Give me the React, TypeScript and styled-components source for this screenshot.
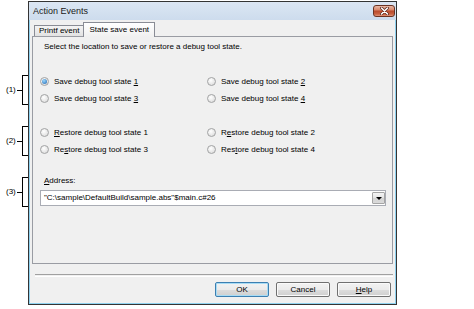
import React from "react";
import styled, { createGlobalStyle, css } from "styled-components";

const GlobalStyle = createGlobalStyle`
  html, body {
    margin: 0;
    padding: 0;
    background: #ffffff;
  }
  body {
    font-family: "Liberation Sans", Arial, sans-serif;
    font-size: 8px;
    color: #000;
  }
`;

const Stage = styled.div`
  position: relative;
  width: 474px;
  height: 309px;
  padding: 1px 0 0 28px;
  box-sizing: border-box;
`;

const Window = styled.div`
  width: 369px;
  height: 304px;
  box-sizing: border-box;
  border: 1px solid #343434;
  background: #8fd2ef;
  display: flex;
  flex-direction: column;
`;

const TitleBar = styled.div`
  height: 18px;
  flex-shrink: 0;
  display: flex;
  align-items: flex-start;
  padding-left: 4px;
  background: linear-gradient(to bottom, #dbe6f3, #cddced);
`;

const Title = styled.span`
  font-size: 9px;
  line-height: 18px;
  color: #1a1a1a;
`;

const CloseButton = styled.div`
  margin: 3px 1px 0 auto;
  width: 22px;
  height: 12px;
  box-sizing: border-box;
  border: 1px solid #6b3323;
  border-radius: 3px;
  background: linear-gradient(
    to bottom,
    #e9b8a6 0%,
    #d9876a 40%,
    #b94a2d 50%,
    #c9613f 80%,
    #e09378 100%
  );
  display: flex;
  align-items: center;
  justify-content: center;
`;

const Client = styled.div`
  flex: 1;
  margin: 0 1px 1px 1px;
  padding: 1px 2px 0 2px;
  background: #f0f0f0;
  display: flex;
  flex-direction: column;
`;

const TabStrip = styled.div`
  height: 15px;
  display: flex;
  align-items: flex-end;
  padding-left: 2px;
  position: relative;
  z-index: 1;
`;

const Tab = styled.div<{ $active?: boolean }>`
  box-sizing: border-box;
  border: 1px solid #898c95;
  border-bottom: none;
  white-space: nowrap;
  ${(p) =>
    p.$active
      ? css`
          height: 15px;
          margin-bottom: -1px;
          padding: 0 5px;
          line-height: 13px;
          background: linear-gradient(to bottom, #ffffff, #f0f0f0);
        `
      : css`
          height: 11px;
          padding: 0 4px;
          line-height: 10px;
          background: linear-gradient(to bottom, #f4f4f4, #e2e2e2);
          border-right: none;
        `}
`;

const Panel = styled.div`
  height: 228px;
  box-sizing: border-box;
  border: 1px solid #9a9ca3;
  padding: 5px 7px 0 7px;
  background: #f0f0f0;
  display: flex;
  flex-direction: column;
`;

const Description = styled.div`
  height: 10px;
  line-height: 10px;
  margin-left: 4px;
`;

const RadioGrid = styled.div<{ $gap: number }>`
  margin-top: ${(p) => p.$gap}px;
  display: grid;
  grid-template-columns: 167px 1fr;
  grid-auto-rows: 17px;
`;

const RadioItem = styled.label`
  display: flex;
  align-items: center;
  gap: 5px;
  line-height: 10px;
`;

const RadioDot = styled.span<{ $checked?: boolean }>`
  width: 9px;
  height: 9px;
  box-sizing: border-box;
  border-radius: 50%;
  border: 1px solid #a2a3a4;
  background: radial-gradient(circle at 40% 35%, #ffffff, #d6d6d6);
  display: flex;
  align-items: center;
  justify-content: center;
  &::after {
    content: "";
    display: ${(p) => (p.$checked ? "block" : "none")};
    width: 5px;
    height: 5px;
    border-radius: 50%;
    background: radial-gradient(circle at 40% 35%, #9ad8ff, #1d62ad);
  }
`;

const Mnemonic = styled.span`
  text-decoration: underline;
`;

const FieldLabel = styled.div`
  margin-top: 18px;
  height: 10px;
  line-height: 10px;
  margin-left: 4px;
`;

const Combo = styled.div`
  margin-top: 4px;
  width: 346px;
  height: 16px;
  box-sizing: border-box;
  border: 1px solid #a9acb4;
  background: #ffffff;
  display: flex;
  align-items: center;
  padding: 0 0 0 3px;
`;

const ComboText = styled.span`
  flex: 1;
  white-space: nowrap;
  line-height: 12px;
`;

const ComboArrow = styled.div`
  width: 13px;
  height: 12px;
  box-sizing: border-box;
  border: 1px solid #a5a5a5;
  border-radius: 1px;
  background: linear-gradient(to bottom, #f4f4f4, #e4e4e4 50%, #d3d3d3 51%, #dadada);
  display: flex;
  align-items: center;
  justify-content: center;
  &::after {
    content: "";
    width: 0;
    height: 0;
    border-left: 3px solid transparent;
    border-right: 3px solid transparent;
    border-top: 3px solid #000;
  }
`;

const Separator = styled.div`
  margin: 10px 0 0 3px;
  height: 1px;
  border-top: 1px solid #a0a0a0;
  border-bottom: 1px solid #ffffff;
`;

const Footer = styled.div`
  margin-top: 5px;
  display: flex;
  justify-content: flex-end;
  gap: 7px;
  padding-right: 2px;
`;

const Button = styled.div<{ $default?: boolean }>`
  width: 54px;
  height: 15px;
  box-sizing: border-box;
  border: 1px solid ${(p) => (p.$default ? "#3c7fb1" : "#707070")};
  border-radius: 2px;
  background: linear-gradient(to bottom, #f2f2f2, #ebebeb 50%, #dddddd 51%, #cfcfcf);
  box-shadow: ${(p) => (p.$default ? "inset 0 0 0 1px #a8dcf5" : "inset 0 0 0 1px #fafafa")};
  display: flex;
  align-items: center;
  justify-content: center;
  line-height: 12px;
`;

const Callout = styled.div<{ $top: number }>`
  position: absolute;
  left: 6px;
  top: ${(p) => p.$top}px;
  height: 30px;
  display: flex;
  align-items: center;
`;

const CalloutLabel = styled.span`
  width: 11px;
  line-height: 10px;
`;

const CalloutDash = styled.span`
  width: 5px;
  height: 1px;
  background: #000;
`;

const Bracket = styled.span`
  width: 6px;
  height: 30px;
  box-sizing: border-box;
  border: 1px solid #000;
  border-right: none;
`;

type Opt = { pre: string; key: string; post: string; checked?: boolean };

const saveOpts: Opt[] = [
  { pre: "Save debug tool state ", key: "1", post: "", checked: true },
  { pre: "Save debug tool state ", key: "2", post: "" },
  { pre: "Save debug tool state ", key: "3", post: "" },
  { pre: "Save debug tool state ", key: "4", post: "" },
];

const restoreOpts: Opt[] = [
  { pre: "", key: "R", post: "estore debug tool state 1" },
  { pre: "R", key: "e", post: "store debug tool state 2" },
  { pre: "Re", key: "s", post: "tore debug tool state 3" },
  { pre: "Res", key: "t", post: "ore debug tool state 4" },
];

const address = '"C:\\sample\\DefaultBuild\\sample.abs"$main.c#26';

function RadioSet({ items, gap }: { items: Opt[]; gap: number }) {
  return (
    <RadioGrid $gap={gap}>
      {items.map((o, i) => (
        <RadioItem key={i}>
          <RadioDot $checked={o.checked} />
          <span>
            {o.pre}
            <Mnemonic>{o.key}</Mnemonic>
            {o.post}
          </span>
        </RadioItem>
      ))}
    </RadioGrid>
  );
}

export default function App() {
  return (
    <>
      <GlobalStyle />
      <Stage>
        <Window>
          <TitleBar>
            <Title>Action Events</Title>
            <CloseButton>
              <svg width="9" height="8" viewBox="0 0 9 8">
                <path d="M1.5 1 L7.5 7 M7.5 1 L1.5 7" stroke="#5a2418" strokeWidth="3" strokeLinecap="round" />
                <path d="M1.5 1 L7.5 7 M7.5 1 L1.5 7" stroke="#ffffff" strokeWidth="1.6" strokeLinecap="round" />
              </svg>
            </CloseButton>
          </TitleBar>
          <Client>
            <TabStrip>
              <Tab>Printf event</Tab>
              <Tab $active>State save event</Tab>
            </TabStrip>
            <Panel>
              <Description>Select the location to save or restore a debug tool state.</Description>
              <RadioSet items={saveOpts} gap={21} />
              <RadioSet items={restoreOpts} gap={17} />
              <FieldLabel>
                <Mnemonic>A</Mnemonic>ddress:
              </FieldLabel>
              <Combo>
                <ComboText>{address}</ComboText>
                <ComboArrow />
              </Combo>
            </Panel>
            <Separator />
            <Footer>
              <Button $default>OK</Button>
              <Button>Cancel</Button>
              <Button>
                <span>
                  <Mnemonic>H</Mnemonic>elp
                </span>
              </Button>
            </Footer>
          </Client>
        </Window>
        <Callout $top={75}>
          <CalloutLabel>(1)</CalloutLabel>
          <CalloutDash />
          <Bracket />
        </Callout>
        <Callout $top={126}>
          <CalloutLabel>(2)</CalloutLabel>
          <CalloutDash />
          <Bracket />
        </Callout>
        <Callout $top={177}>
          <CalloutLabel>(3)</CalloutLabel>
          <CalloutDash />
          <Bracket />
        </Callout>
      </Stage>
    </>
  );
}
